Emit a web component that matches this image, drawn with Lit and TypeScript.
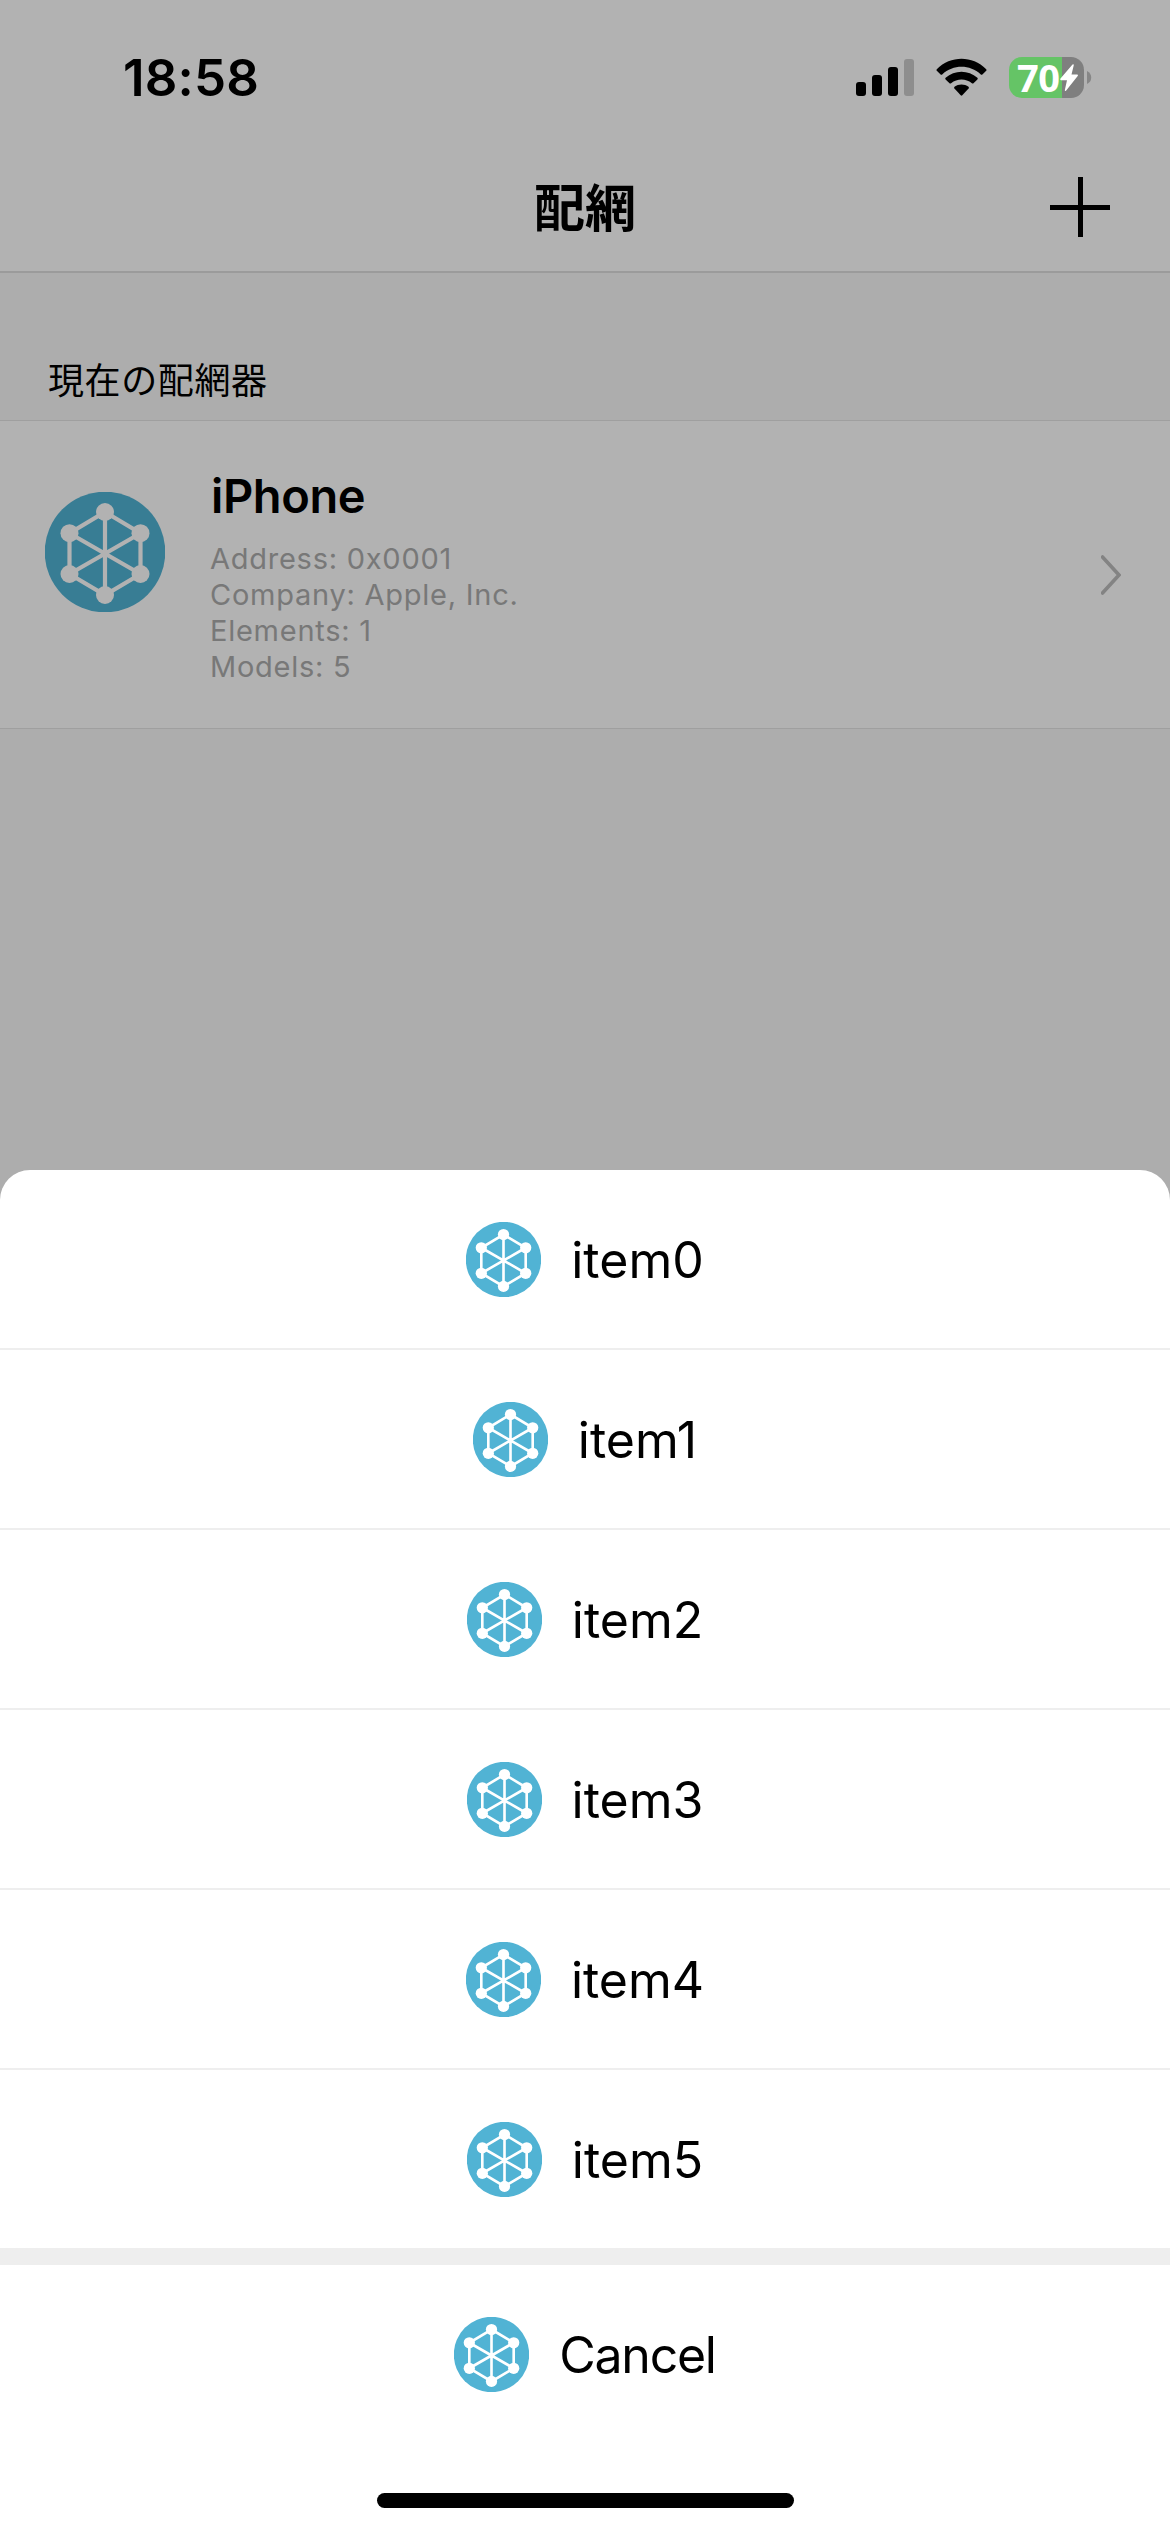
import { LitElement, html, css, svg } from "lit";
import { customElement, property } from "lit/decorators.js";

const NODES: [number, number][] = [
  [60, 20], [95.5, 41.2], [95.5, 82], [60, 103], [24.5, 82], [24.5, 41.2],
];

@customElement("mesh-icon")
class MeshIcon extends LitElement {
  static styles = css`
    :host { display: block; flex: none; width: 75px; height: 75px; }
    :host([large]) { width: 120px; height: 120px; }
    .art { display: block; width: 100%; height: 100%; }
  `;
  render() {
    return html`<svg class="art" viewBox="0 0 120 120">
      <circle cx="60" cy="60" r="60.3" fill="#51b3d4" />
      <path
        d="M60 20 95.5 41.2V82L60 103 24.5 82V41.2ZM60 20V103M24.5 41.2 95.5 82M95.5 41.2 24.5 82"
        fill="none" stroke="#fff" stroke-width="4.2" />
      ${NODES.map(([x, y]) => svg`<circle cx=${x} cy=${y} r="9" fill="#fff" />`)}
    </svg>`;
  }
}

@customElement("sheet-row")
class SheetRow extends LitElement {
  @property() label = "";
  static styles = css`
    :host {
      display: flex; align-items: center; justify-content: center; gap: 30px;
      box-sizing: border-box; height: 180px; padding-top: 1px;
      border-bottom: 2px solid #eeeeee;
    }
    :host([plain]) { border-bottom-color: transparent; }
    .label { font-size: 50px; line-height: 60px; letter-spacing: 0; white-space: nowrap; }
    :host([plain]) .label { letter-spacing: -1.25px; }
  `;
  render() {
    return html`<mesh-icon></mesh-icon><span class="label">${this.label}</span>`;
  }
}

@customElement("status-bar")
class StatusBar extends LitElement {
  static styles = css`
    :host { display: flex; justify-content: space-between; box-sizing: border-box;
      height: 141px; padding: 46px 78px 0 123px; position: relative; z-index: 2; }
    .time { font-size: 51px; line-height: 64px; font-weight: 600; letter-spacing: 0.2px; }
    .icons { display: flex; height: 41px; padding-top: 11px; }
    .signal { width: 58px; height: 41px; margin-right: 22px; }
    .wifi { width: 51px; height: 41px; margin-right: 22px; }
    .battery { display: grid; grid-template-columns: 75px 5px; column-gap: 3px; align-items: center; }
    .cell { display: flex; align-items: center; width: 75px; height: 41px; border-radius: 13px;
      box-sizing: border-box; padding-left: 8px;
      background: linear-gradient(90deg, #65c466 53px, #7f7f7f 53px); }
    .level { width: 43px; font: 700 38px/41px "Open Sans", sans-serif; color: #fff; letter-spacing: -0.4px; }
    .bolt { width: 18px; height: 27px; }
    .nub { width: 5px; height: 13px; }
  `;
  render() {
    return html`
      <div class="time">18:58</div>
      <div class="icons">
        <svg class="signal" viewBox="0 0 58 41">
          <rect x="0" y="25" width="10" height="14" rx="3" />
          <rect x="16" y="18" width="10" height="21" rx="3" />
          <rect x="32" y="10" width="10" height="29" rx="3" />
          <rect x="48" y="2" width="10" height="37" rx="3" fill="#8e8e8e" />
        </svg>
        <svg class="wifi" viewBox="0 0 51 41">
          <path d="M.8 12.2C14.8-1.6 36.2-1.6 50.2 12.2Q50.9 13 50.2 13.8L46.4 17.4Q45.6 18.1 44.8 17.4C33.8 7.2 17.2 7.2 6.2 17.4Q5.4 18.1 4.6 17.4L.8 13.8Q.1 13 .8 12.2Z" />
          <path d="M9.6 20.8C18.6 12.6 32.4 12.6 41.4 20.8Q42.2 21.6 41.4 22.4L37.5 26.2Q36.7 26.9 35.9 26.2C29.8 21.2 21.2 21.2 15.1 26.2Q14.3 26.9 13.5 26.2L9.6 22.4Q8.8 21.6 9.6 20.8Z" />
          <path d="M18.5 29.8C22.6 26.7 28.4 26.7 32.5 29.8Q33.3 30.6 32.6 31.4L26.3 38.3Q25.5 39 24.7 38.3L18.4 31.4Q17.7 30.6 18.5 29.8Z" />
        </svg>
        <div class="battery">
          <div class="cell">
            <span class="level">70</span>
            <svg class="bolt" viewBox="0 0 18 27">
              <path d="M12.5.4Q14.1-.4 13.7 1.4L11.5 10.6H17.2Q18.4 10.9 17.7 12L6.2 26.4Q4.6 27.8 4.9 25.8L7 16.2H1Q-.2 15.9.5 14.6Z" fill="#fff" />
            </svg>
          </div>
          <svg class="nub" viewBox="0 0 5 13"><path d="M0 0Q4.2 2 4.2 6.5T0 13Z" fill="#868686" /></svg>
        </div>
      </div>`;
  }
}

@customElement("app-root")
class AppRoot extends LitElement {
  static styles = css`
    :host { display: block; position: relative; width: 1170px; height: 2532px; overflow: hidden;
      background: #f8f8f8; color: #000;
      font-family: Inter, "Noto Sans CJK JP", sans-serif; }
    .header { background: #fff; border-bottom: 2px solid #dfdfdf; }
    .nav { display: grid; grid-template-columns: 1fr auto 1fr; align-items: center; height: 130px; }
    .title { grid-column: 2; margin: 0 0 3px; font: 700 51px/74px "Noto Sans CJK JP", sans-serif; }
    .add { justify-self: end; width: 60px; height: 60px; margin: 2px 60px 0 0; }
    .section { height: 147px; display: flex; align-items: flex-end; box-sizing: border-box;
      padding: 0 0 16px 48px; font: 400 36px/52px "Noto Sans CJK JP", sans-serif; letter-spacing: 0.6px; }
    .device { display: grid; grid-template-columns: 120px 1fr 20px; column-gap: 45px; align-items: start;
      box-sizing: border-box; height: 309px; padding: 0 49px 0 45px; background: #fff;
      border-top: 1px solid #e4e4e4; border-bottom: 1px solid #e4e4e4; }
    .glyph { margin-top: 71px; }
    .name { margin: 46px 0 16px 1px; font-size: 47px; line-height: 58px; font-weight: 600; letter-spacing: -0.4px; }
    .line { font-size: 29px; line-height: 36px; color: #adadad; letter-spacing: 0.75px; }
    .chevron { width: 20px; height: 42px; margin-top: 133px; }
    .scrim { position: absolute; inset: 0; background: rgba(0, 0, 0, 0.3); }
    .sheet { position: absolute; left: 0; right: 0; bottom: 0; height: 1362px; background: #fff;
      border-radius: 30px 30px 0 0; display: flex; flex-direction: column; overflow: hidden; }
    .gap { height: 15px; background: #eeeeee; }
    .home { width: 417px; height: 15px; border-radius: 8px; background: #000; margin: auto auto 24px; }
  `;
  private items = ["item0", "item1", "item2", "item3", "item4", "item5"];
  private details = ["Address: 0x0001", "Company: Apple, Inc.", "Elements: 1", "Models: 5"];
  render() {
    return html`
      <div class="header">
        <status-bar></status-bar>
        <div class="nav">
          <h1 class="title">配網</h1>
          <svg class="add" viewBox="0 0 60 60"><path d="M30.5 0V60M0 30.5H60" stroke="#000" stroke-width="5" /></svg>
        </div>
      </div>
      <div class="section">現在の配網器</div>
      <div class="device">
        <mesh-icon class="glyph" large></mesh-icon>
        <div>
          <h2 class="name">iPhone</h2>
          ${this.details.map((d) => html`<div class="line">${d}</div>`)}
        </div>
        <svg class="chevron" viewBox="0 0 20 42">
          <path d="M1.5 3 18 21 1.5 39" fill="none" stroke="#bcbcbc" stroke-width="3.6" stroke-linecap="round" />
        </svg>
      </div>
      <div class="scrim"></div>
      <div class="sheet">
        ${this.items.map((i) => html`<sheet-row .label=${i}></sheet-row>`)}
        <div class="gap"></div>
        <sheet-row plain .label=${"Cancel"}></sheet-row>
        <div class="home"></div>
      </div>`;
  }
}
